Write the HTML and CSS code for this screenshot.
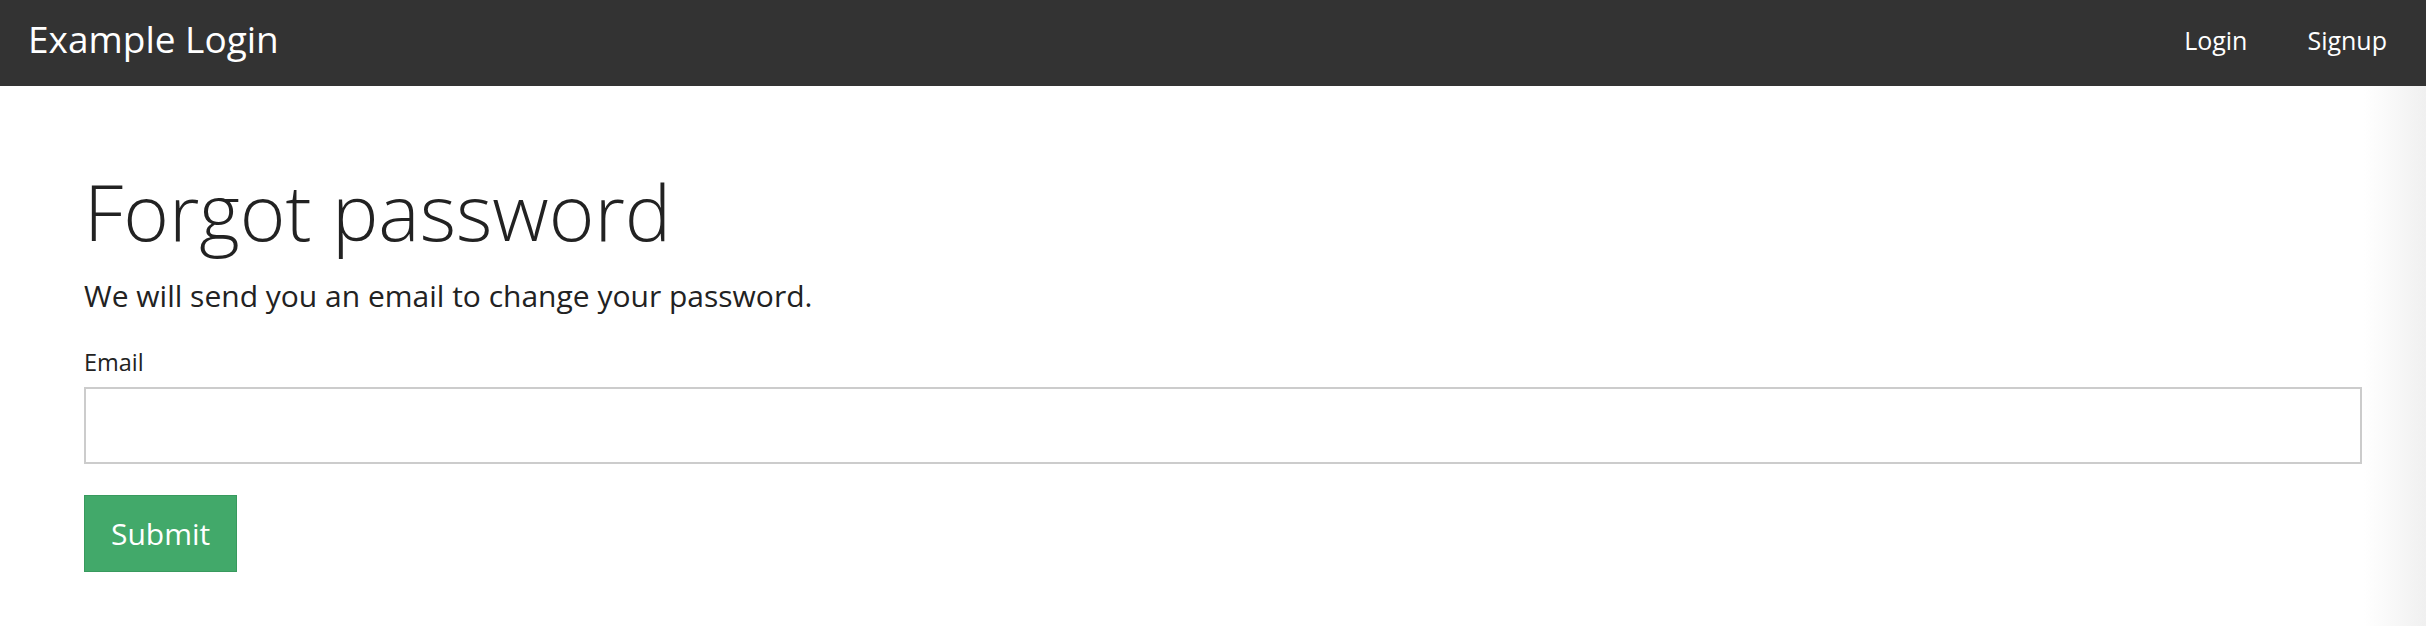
FILE: index.html
```html
<!DOCTYPE html>
<html lang="en">
<head>
<meta charset="utf-8">
<title>Forgot password</title>
<link rel="stylesheet" href="styles.css">
</head>
<body>
<header class="navbar">
  <a class="brand" href="#">Example Login</a>
  <nav class="nav-links">
    <a class="nav-link" href="#">Login</a>
    <a class="nav-link" href="#">Signup</a>
  </nav>
</header>
<main class="container">
  <h1 class="title">Forgot password</h1>
  <p class="lead">We will send you an email to change your password.</p>
  <form class="form">
    <label class="label" for="email">Email</label>
    <input class="input" id="email" type="email">
    <button class="btn" type="button">Submit</button>
  </form>
</main>
</body>
</html>
```
FILE: styles.css
```css
html, body {
  margin: 0;
  padding: 0;
}
body {
  font-family: "Open Sans", "Noto Sans", sans-serif;
  color: #222;
  height: 626px;
  background: linear-gradient(to right, #ffffff 0, #ffffff calc(100% - 62px), #f0f0f0 100%);
}
.navbar {
  box-sizing: border-box;
  height: 86px;
  background: #333333;
  display: flex;
  align-items: flex-start;
  justify-content: space-between;
  padding: 13px 9px 0 28px;
}
.brand {
  color: #ffffff;
  text-decoration: none;
  font-size: 37px;
  line-height: 51px;
  font-weight: 400;
}
.nav-links {
  display: flex;
}
.nav-link {
  color: #ffffff;
  text-decoration: none;
  font-size: 25px;
  line-height: 48px;
  padding: 3px 30px 0;
}
.container {
  margin: 0 64px 0 84px;
  padding-top: 81px;
  display: flex;
  flex-direction: column;
}
.title {
  margin: 0;
  font-size: 78px;
  line-height: 88px;
  font-weight: 300;
  color: #222;
}
.lead {
  margin: 20px 0 0;
  font-size: 30px;
  line-height: 41px;
}
.form {
  display: flex;
  flex-direction: column;
  align-items: flex-start;
  margin-top: 31px;
}
.label {
  font-size: 23.5px;
  line-height: 30px;
  font-weight: 500;
}
.input {
  box-sizing: border-box;
  margin-top: 10px;
  width: 100%;
  height: 77px;
  border: 2px solid #cccccc;
  background: #fff;
  font-size: 22px;
  padding: 0 12px;
  outline: none;
}
.btn {
  margin-top: 31px;
  box-sizing: border-box;
  height: 77px;
  padding: 17px 26px;
  background: #42a96a;
  border: 1px solid #389a5e;
  color: #ffffff;
  font-family: "Open Sans", "Noto Sans", sans-serif;
  font-size: 30px;
  line-height: 41px;
  font-weight: 500;
  cursor: pointer;
}
```
